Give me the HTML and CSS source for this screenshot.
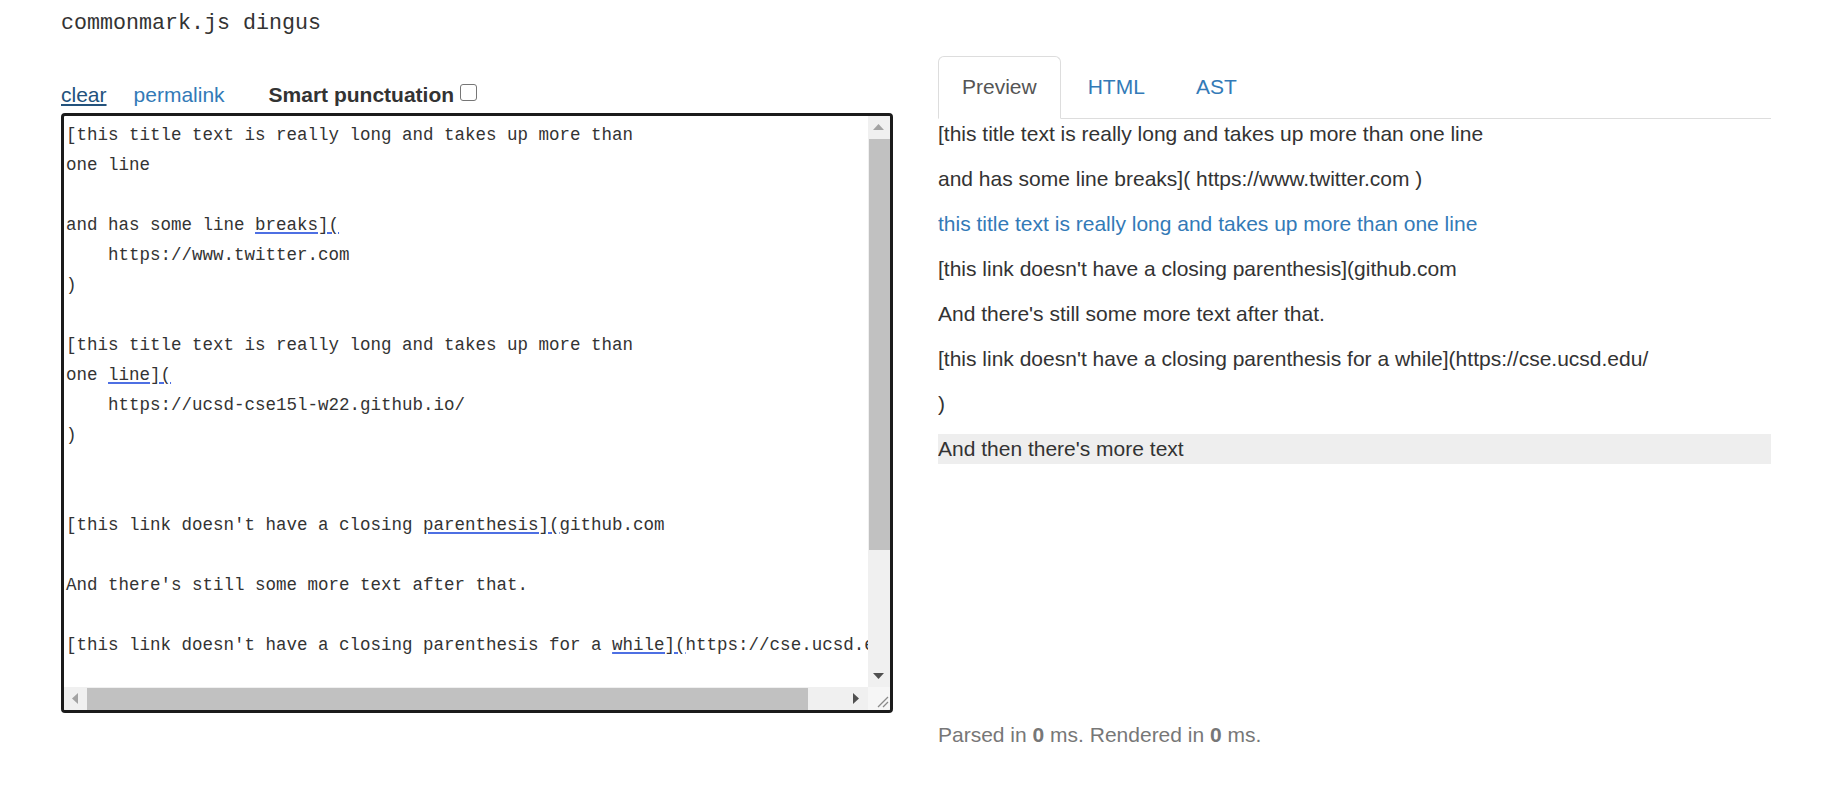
FILE: index.html
```html
<!DOCTYPE html>
<html lang="en">
<head>
<meta charset="utf-8">
<title>commonmark.js dingus</title>
<link rel="stylesheet" href="styles.css">
</head>
<body>
<div class="page">
  <h1 class="title">commonmark.js dingus</h1>
  <div class="row">
    <div class="col">
      <div class="controls"><a class="clear" href="#">clear</a><a class="permalink" href="#">permalink</a><label class="smart">Smart punctuation<input type="checkbox" class="check"></label></div>
      <div class="editor">
        <pre class="source">[this title text is really long and takes up more than
one line

and has some line <span class="sp">breaks](</span>
    https://www.twitter.com
)

[this title text is really long and takes up more than
one <span class="sp">line](</span>
    https://ucsd-cse15l-w22.github.io/
)


[this link doesn't have a closing <span class="sp">parenthesis](</span>github.com

And there's still some more text after that.

[this link doesn't have a closing parenthesis for a <span class="sp">while](</span>https://cse.ucsd.edu/

)
</pre>
        <div class="vbar">
          <div class="btn"><svg width="11" height="6" viewBox="0 0 11 6"><path d="M5.5 0 L11 6 L0 6 Z" fill="#a3a3a3"/></svg></div>
          <div class="vthumb"></div>
          <div class="track"></div>
          <div class="btn"><svg width="11" height="6" viewBox="0 0 11 6"><path d="M0 0 L11 0 L5.5 6 Z" fill="#505050"/></svg></div>
        </div>
        <div class="hbar">
          <div class="btn"><svg width="6" height="11" viewBox="0 0 6 11"><path d="M6 0 L6 11 L0 5.5 Z" fill="#a3a3a3"/></svg></div>
          <div class="hthumb"></div>
          <div class="track"></div>
          <div class="btn"><svg width="6" height="11" viewBox="0 0 6 11"><path d="M0 0 L6 5.5 L0 11 Z" fill="#505050"/></svg></div>
        </div>
        <div class="corner"><svg width="22" height="22" viewBox="0 0 22 22"><path d="M20 10 L10 20 M20 15 L15 20" stroke="#8a8a8a" stroke-width="1.3" fill="none"/></svg></div>
      </div>
    </div>
    <div class="col">
      <ul class="tabs">
        <li class="active"><a href="#">Preview</a></li>
        <li><a href="#">HTML</a></li>
        <li><a href="#">AST</a></li>
      </ul>
      <div class="preview">
        <p>[this title text is really long and takes up more than one line</p>
        <p>and has some line breaks]( https://www.twitter.com )</p>
        <p><a href="#">this title text is really long and takes up more than one line</a></p>
        <p>[this link doesn't have a closing parenthesis](github.com</p>
        <p>And there's still some more text after that.</p>
        <p>[this link doesn't have a closing parenthesis for a while](https://cse.ucsd.edu/</p>
        <p>)</p>
        <p class="selected">And then there's more text</p>
      </div>
      <p class="timing">Parsed in <strong>0</strong> ms. Rendered in <strong>0</strong> ms.</p>
    </div>
  </div>
</div>
</body>
</html>
```
FILE: styles.css
```css
* { box-sizing: border-box; }
html, body { margin: 0; padding: 0; background: #fff; }
body {
  font-family: "Liberation Sans", Arial, sans-serif;
  font-size: 21px;
  line-height: 30px;
  color: #333;
}
.page { padding: 6px 0 0 61px; }
.title {
  margin: 0 0 13.5px;
  font-family: "Liberation Mono", "DejaVu Sans Mono", monospace;
  font-size: 21.67px;
  line-height: 36px;
  font-weight: normal;
  color: #333;
}
.row {
  display: grid;
  grid-template-columns: 832px 833px;
  column-gap: 45px;
}
.controls {
  display: flex;
  align-items: baseline;
  height: 30px;
  margin: 24px 0 3.5px;
  line-height: 30px;
}
.controls a { text-decoration: none; }
.clear {
  color: #23527c;
  text-decoration: underline !important;
  text-decoration-color: #23527c;
}
.permalink { color: #337ab7; margin-left: 27px; }
.smart {
  display: flex;
  align-items: flex-start;
  margin-left: 44px;
  font-weight: bold;
  color: #333;
}
.check {
  appearance: none;
  -webkit-appearance: none;
  width: 17px;
  height: 17px;
  margin: 4px 0 0 6px;
  border: 1px solid #767676;
  border-radius: 3px;
  background: #fff;
}
.editor {
  height: 599.5px;
  border: 3px solid #1b1b1b;
  border-radius: 4px;
  display: grid;
  grid-template-columns: 1fr 22.5px;
  grid-template-rows: 1fr 22.5px;
  overflow: hidden;
  background: #fff;
}
.source {
  margin: 0;
  padding: 4px 0 0 2px;
  font-family: "Liberation Mono", "DejaVu Sans Mono", monospace;
  font-size: 17.5px;
  line-height: 30px;
  color: #333;
  white-space: pre;
  overflow: hidden;
}
.sp {
  text-decoration: underline;
  text-decoration-color: #4d6fe3;
  text-decoration-thickness: 2px;
  text-underline-offset: 2px;
}
.vbar, .hbar { display: flex; background: #f0f0f0; }
.vbar { flex-direction: column; }
.btn {
  flex: 0 0 22.5px;
  display: flex;
  align-items: center;
  justify-content: center;
}
.vthumb { flex: 0 0 411px; background: #c1c1c1; margin-left: 1px; }
.hthumb { flex: 0 0 721px; background: #c1c1c1; margin-top: 1px; }
.track { flex: 1; }
.corner { background: #f6f6f6; display: flex; }
.tabs {
  display: flex;
  margin: 0;
  padding: 0;
  list-style: none;
  border-bottom: 1px solid #ddd;
}
.tabs li { margin-bottom: -1px; }
.tabs a {
  display: block;
  padding: 15.5px 23px;
  line-height: 30px;
  border: 1px solid transparent;
  border-radius: 6px 6px 0 0;
  margin-right: 3px;
  color: #337ab7;
  text-decoration: none;
}
.tabs .active a {
  color: #555;
  background: #fff;
  border-color: #ddd #ddd transparent;
}
.preview { height: 601px; overflow: hidden; }
.preview p { margin: 0 0 15px; }
.preview a { color: #337ab7; text-decoration: none; }
.preview .selected { background: #eee; }
.timing { margin: 0; color: #777; }
.timing strong { font-weight: bold; }
```
